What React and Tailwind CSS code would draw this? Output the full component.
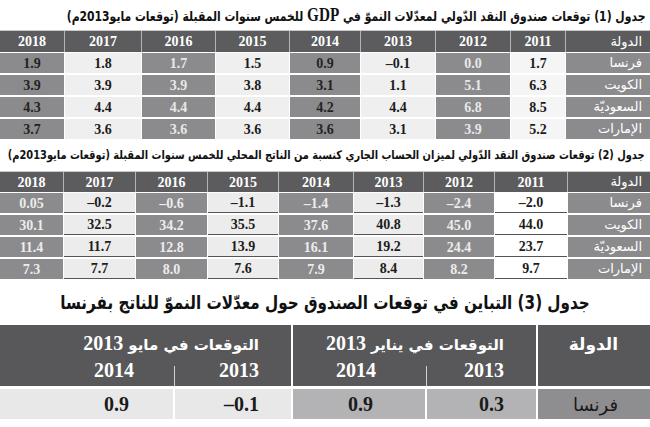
import React from 'react'

const ar = "font-['DejaVu_Sans',sans-serif]"
const num = "font-['Liberation_Serif',serif] font-bold"

const countries = ['فرنسا', 'الكويت', 'السعوديّة', 'الإمارات']
const years = ['2011', '2012', '2013', '2014', '2015', '2016', '2017', '2018']

// table 1 - growth forecasts
const growth = [
    ['1.7', '0.0', '–0.1', '0.9', '1.5', '1.7', '1.8', '1.9'],
    ['6.3', '5.1', '1.1', '3.1', '3.8', '3.9', '3.9', '3.9'],
    ['8.5', '6.8', '4.4', '4.2', '4.4', '4.4', '4.4', '4.3'],
    ['5.2', '3.9', '3.1', '3.6', '3.6', '3.6', '3.6', '3.7'],
]

// table 2 - current account balance
const balance = [
    ['–2.0', '–2.4', '–1.3', '–1.4', '–1.1', '–0.6', '–0.2', '0.05'],
    ['44.0', '45.0', '40.8', '37.6', '35.5', '34.2', '32.5', '30.1'],
    ['23.7', '24.4', '19.2', '16.1', '13.9', '12.8', '11.7', '11.4'],
    ['9.7', '8.2', '8.4', '7.9', '7.6', '8.0', '7.7', '7.3'],
]

const gray = 'bg-[#8b8b8d]'
const t1Cells = [
    'bg-[#f5f5f5] text-[#1c1c1c]',
    `${gray} text-[#e8e8e8]`,
    'bg-[#efefef] text-[#1c1c1c]',
    `${gray} text-[#232323]`,
    'bg-[#efefef] text-[#1c1c1c]',
    `${gray} text-[#e8e8e8]`,
    'bg-[#efefef] text-[#1c1c1c]',
    `${gray} text-[#232323]`,
]

const t2Cells = [
    'bg-white text-[#1c1c1c] border-b border-[#555]',
    `${gray} text-[#ececec]`,
    'bg-[#ececec] text-[#1c1c1c] border-b border-[#555]',
    `${gray} text-[#ececec]`,
    'bg-[#ececec] text-[#1c1c1c] border-b border-[#555]',
    `${gray} text-[#ececec]`,
    'bg-[#ececec] text-[#1c1c1c] border-b border-[#555]',
    `${gray} text-[#ececec]`,
]

const DataTable = ({ cols, rows, cells, headH }) => {
    return (
        <div dir="rtl" className="flex flex-col">
            <div className={`grid ${cols} gap-x-px bg-[#b4b4b4] border-t border-[#c8c8c8]`}>
                <div className={`${headH} bg-[#5c5c5e] text-white text-[13px] ${ar} flex items-center pr-2`}>الدولة</div>
                {years.map((y) => (
                    <div key={y} className={`${headH} bg-[#5c5c5e] text-white text-[14px] ${num} flex items-center justify-center`}>{y}</div>
                ))}
            </div>
            <div className={`grid ${cols} gap-x-px gap-y-[2px] bg-white pt-px`}>
                {rows.map((r, i) => (
                    <React.Fragment key={i}>
                        <div className={`h-[20px] ${gray} text-white text-[13px] ${ar} whitespace-nowrap flex items-center pr-2`}>{countries[i]}</div>
                        {r.map((v, j) => (
                            <div key={j} dir="ltr" className={`h-[20px] ${cells[j]} text-[14px] ${num} flex items-center justify-center`}>{v}</div>
                        ))}
                    </React.Fragment>
                ))}
            </div>
        </div>
    )
}

const Group = ({ label, w1, w2, pr2 }) => (
    <div className="h-[61px] bg-[#58585a] text-white flex flex-col">
        <div className="h-[32px] flex items-end pr-[32px] whitespace-nowrap">
            <div className="leading-[24px]">
                <span className={`${ar} font-bold text-[15px]`}>{label}</span>
                <span className={`${num} text-[20px] mr-[5px]`}>2013</span>
            </div>
        </div>
        <div className="flex-1 flex">
            <div className={`${w1} relative flex justify-start pr-[32px]`}>
                <span className={`${num} text-[20px] leading-[26px]`}>2013</span>
                <div className="absolute left-0 bottom-0 h-[20px] w-px bg-[#d0d0d0]"></div>
            </div>
            <div className={`${w2} flex justify-start ${pr2}`}>
                <span className={`${num} text-[20px] leading-[26px]`}>2014</span>
            </div>
        </div>
    </div>
)

const App = () => {
    return (
        <div className="w-[650px] h-[427px] bg-white overflow-hidden flex flex-col">
            <div dir="rtl" className="h-[30px] flex items-center pr-[5px] text-[#111] whitespace-nowrap">
                <span className={`${ar} font-bold text-[13.5px] inline-block scale-x-80 origin-right`}>
                    جدول (1) توقعات صندوق النقد الدّولي لمعدّلات النموّ في <span className={`${num} text-[19px]`}>GDP</span> للخمس سنوات المقبلة (توقعات مايو2013م)
                </span>
            </div>
            <DataTable
                cols="grid-cols-[84px_54px_74px_74px_70px_73px_73px_76px_64px]"
                rows={growth}
                cells={t1Cells}
                headH="h-[21px]"
            />
            <div dir="rtl" className="h-[32px] flex items-center pr-[5px] text-[#111] whitespace-nowrap">
                <span className={`${ar} font-bold text-[12px] inline-block scale-x-[0.82] origin-right`}>
                    جدول (2) توقعات صندوق النقد الدّولي لميزان الحساب الجاري كنسبة من الناتج المحلي للخمس سنوات المقبلة (توقعات مايو2013م)
                </span>
            </div>
            <DataTable
                cols="grid-cols-[82px_72px_70px_69px_74px_70px_71px_71px_63px]"
                rows={balance}
                cells={t2Cells}
                headH="h-[20px]"
            />
            <div dir="rtl" className="h-[46px] flex items-center justify-center text-[#111] whitespace-nowrap">
                <span className={`${ar} font-bold text-[19px] inline-block scale-x-80`}>
                    جدول (3) التباين في توقعات الصندوق حول معدّلات النموّ للناتج بفرنسا
                </span>
            </div>
            <div dir="rtl" className="flex flex-col">
                <div className="grid grid-cols-[112px_243px_291px] gap-x-[2px]">
                    <div className={`h-[61px] bg-[#58585a] text-white text-[17px] font-bold ${ar} pr-[32px] pt-[7px]`}>الدولة</div>
                    <Group label="التوقعات في يناير" w1="w-[110px]" w2="w-[133px]" pr2="pr-[50px]" />
                    <Group label="التوقعات في مايو" w1="w-[117px]" w2="w-[174px]" pr2="pr-[40px]" />
                </div>
                <div className="grid grid-cols-[112px_109px_132px_116px_173px] gap-x-[2px] mt-[3px]">
                    <div className={`h-[30px] bg-[#8e8e90] text-[#1a1a1a] text-[18px] ${ar} flex items-center pr-[32px]`}>فرنسا</div>
                    <div dir="ltr" className={`h-[30px] bg-[#b3b3b5] text-[#1a1a1a] text-[20px] ${num} flex items-center justify-end pr-[32px]`}>0.3</div>
                    <div dir="ltr" className={`h-[30px] bg-[#b3b3b5] text-[#1a1a1a] text-[20px] ${num} flex items-center justify-end pr-[52px]`}>0.9</div>
                    <div dir="ltr" className={`h-[30px] bg-[#e8e8e8] text-[#1a1a1a] text-[20px] ${num} flex items-center justify-end pr-[32px]`}>–0.1</div>
                    <div dir="ltr" className={`h-[30px] bg-[#e8e8e8] text-[#1a1a1a] text-[20px] ${num} flex items-center justify-end pr-[44px]`}>0.9</div>
                </div>
            </div>
        </div>
    )
}

export default App
